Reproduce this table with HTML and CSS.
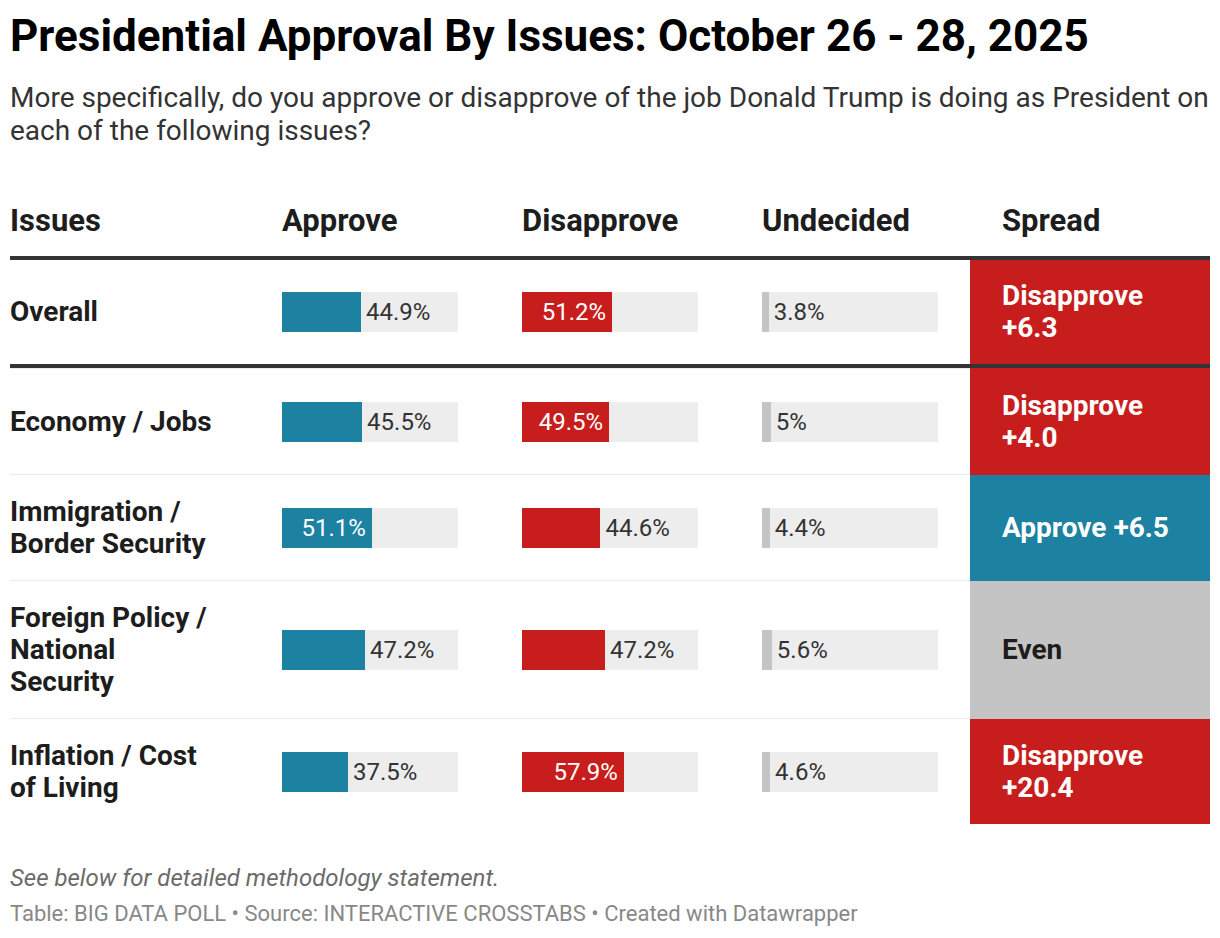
FILE: index.html
```html
<!DOCTYPE html>
<html lang="en">
<head>
<meta charset="utf-8">
<title>Presidential Approval By Issues</title>
<link rel="stylesheet" href="styles.css">
</head>
<body>
<div class="chart">
  <h1 class="title">Presidential Approval By Issues: October 26 - 28, 2025</h1>
  <p class="desc">More specifically, do you approve or disapprove of the job Donald Trump is doing as President on each of the following issues?</p>

  <div class="table">
    <div class="row head">
      <div class="cell first">Issues</div>
      <div class="cell">Approve</div>
      <div class="cell">Disapprove</div>
      <div class="cell">Undecided</div>
      <div class="cell">Spread</div>
    </div>

    <div class="row highlight">
      <div class="cell first label">Overall</div>
      <div class="cell"><div class="bar"><div class="fill blue" style="width:44.9%"></div><span class="out">44.9%</span></div></div>
      <div class="cell"><div class="bar"><div class="fill red" style="width:51.2%"><span class="in">51.2%</span></div></div></div>
      <div class="cell"><div class="bar"><div class="fill grey" style="width:3.8%"></div><span class="out">3.8%</span></div></div>
      <div class="cell spread s-red">Disapprove<br>+6.3</div>
    </div>

    <div class="row after-highlight">
      <div class="cell first label">Economy / Jobs</div>
      <div class="cell"><div class="bar"><div class="fill blue" style="width:45.5%"></div><span class="out">45.5%</span></div></div>
      <div class="cell"><div class="bar"><div class="fill red" style="width:49.5%"><span class="in">49.5%</span></div></div></div>
      <div class="cell"><div class="bar"><div class="fill grey" style="width:5%"></div><span class="out">5%</span></div></div>
      <div class="cell spread s-red">Disapprove<br>+4.0</div>
    </div>

    <div class="row">
      <div class="cell first label">Immigration / Border Security</div>
      <div class="cell"><div class="bar"><div class="fill blue" style="width:51.1%"><span class="in">51.1%</span></div></div></div>
      <div class="cell"><div class="bar"><div class="fill red" style="width:44.6%"></div><span class="out">44.6%</span></div></div>
      <div class="cell"><div class="bar"><div class="fill grey" style="width:4.4%"></div><span class="out">4.4%</span></div></div>
      <div class="cell spread s-blue">Approve +6.5</div>
    </div>

    <div class="row">
      <div class="cell first label">Foreign Policy / National Security</div>
      <div class="cell"><div class="bar"><div class="fill blue" style="width:47.2%"></div><span class="out">47.2%</span></div></div>
      <div class="cell"><div class="bar"><div class="fill red" style="width:47.2%"></div><span class="out">47.2%</span></div></div>
      <div class="cell"><div class="bar"><div class="fill grey" style="width:5.6%"></div><span class="out">5.6%</span></div></div>
      <div class="cell spread s-grey">Even</div>
    </div>

    <div class="row last">
      <div class="cell first label">Inflation / Cost of Living</div>
      <div class="cell"><div class="bar"><div class="fill blue" style="width:37.5%"></div><span class="out">37.5%</span></div></div>
      <div class="cell"><div class="bar"><div class="fill red" style="width:57.9%"><span class="in">57.9%</span></div></div></div>
      <div class="cell"><div class="bar"><div class="fill grey" style="width:4.6%"></div><span class="out">4.6%</span></div></div>
      <div class="cell spread s-red">Disapprove<br>+20.4</div>
    </div>
  </div>

  <p class="notes">See below for detailed methodology statement.</p>
  <p class="footer">Table: BIG DATA POLL • Source: INTERACTIVE CROSSTABS • Created with Datawrapper</p>
</div>
</body>
</html>
```

FILE: styles.css
```css
* { box-sizing: border-box; }

html, body {
  margin: 0;
  padding: 0;
  background: #fff;
}

body {
  font-family: Roboto, "Liberation Sans", sans-serif;
  color: #1d1d1d;
}

.chart {
  width: 1220px;
  padding: 12px 10px 0 10px;
}

.title {
  margin: 0;
  font-size: 44px;
  line-height: 48px;
  font-weight: 700;
  color: #000;
}

.desc {
  margin: 21px 0 0 0;
  font-size: 28px;
  line-height: 33px;
  color: #333;
  width: 1210px;
}

.table {
  margin-top: 56px;
  width: 1200px;
}

.row {
  display: grid;
  grid-template-columns: repeat(5, 240px);
}

.cell {
  display: flex;
  align-items: center;
  padding: 20.5px 32px;
  border-bottom: 1px solid #ebebeb;
  font-size: 28px;
  line-height: 32px;
}

.cell.first {
  padding-left: 0;
}

.label {
  font-weight: 700;
  color: #1d1d1d;
}

.head .cell {
  padding-top: 0;
  padding-bottom: 17px;
  font-weight: 700;
  font-size: 31px;
  line-height: 36px;
  color: #1d1d1d;
  border-bottom: 4px solid #333;
}

.highlight .cell {
  padding-top: 20px;
  padding-bottom: 20px;
  border-bottom: 4px solid #333;
}

.after-highlight .cell {
  border-top: 1px solid #ebebeb;
}

.after-highlight .cell.spread {
  border-top-color: #c71e1d;
}

.last .cell {
  border-bottom: none;
}

.bar {
  display: flex;
  width: 176px;
  height: 40px;
  background: #ededed;
  font-size: 24px;
  line-height: 40px;
}

.fill {
  height: 40px;
  display: flex;
  justify-content: flex-end;
  align-items: center;
}

.fill.blue { background: #1d81a2; }
.fill.red { background: #c71e1d; }
.fill.grey { background: #c4c4c4; }

.in {
  color: #fff;
  padding-right: 6px;
}

.out {
  color: #333;
  padding-left: 5px;
}

.spread {
  font-weight: 700;
  color: #fff;
  border-bottom-color: transparent;
}

.highlight .cell.spread {
  border-bottom-color: #333;
}

.s-red { background: #c71e1d; }
.s-blue { background: #1d81a2; }
.s-grey { background: #c4c4c4; color: #1d1d1d; }

.notes {
  margin: 40px 0 0 0;
  font-size: 24px;
  line-height: 28px;
  font-style: italic;
  color: #6b6b6b;
}

.footer {
  margin: 9px 0 0 0;
  font-size: 22px;
  line-height: 26px;
  color: #888;
}
```
